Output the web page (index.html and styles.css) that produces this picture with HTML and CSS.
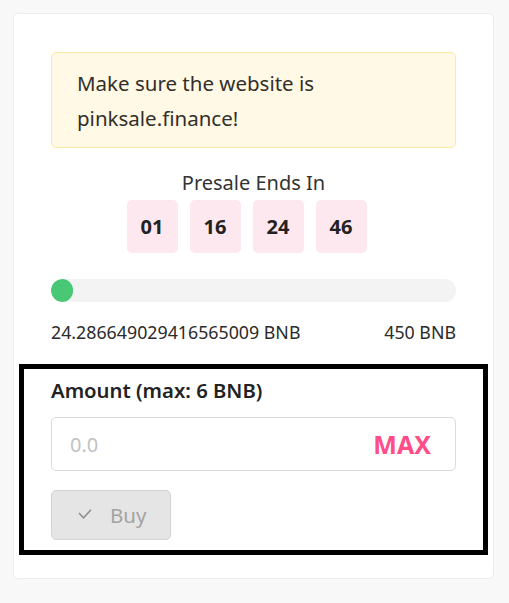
FILE: index.html
```html
<!DOCTYPE html>
<html>
<head>
<meta charset="utf-8">
<link rel="stylesheet" href="styles.css">
</head>
<body>
<div class="card">
  <div class="alert">Make sure the website is pinksale.finance!</div>
  <div class="countdown">
    <div class="title">Presale Ends In</div>
    <div class="boxes">
      <div class="box">01</div>
      <div class="box">16</div>
      <div class="box">24</div>
      <div class="box">46</div>
    </div>
  </div>
  <div class="track"><div class="fill" style="width:22px"></div></div>
  <div class="labels"><span>24.286649029416565009 BNB</span><span>450 BNB</span></div>
  <div class="buybox">
    <div class="label">Amount (max: 6 BNB)</div>
    <div class="input">
      <span class="ph">0.0</span>
      <span class="max">MAX</span>
    </div>
    <button class="buy">
      <svg class="check" width="14" height="10" viewBox="0 0 14 10"><polyline points="1,4 5.5,8.8 13,0.8" fill="none" stroke="#8f8f8f" stroke-width="1.6"/></svg>
      <span>Buy</span>
    </button>
  </div>
</div>
</body>
</html>
```
FILE: styles.css
```css
* { box-sizing: border-box; }
body {
  margin: 0;
  padding: 13px;
  background: #f8f8f8;
  font-family: "Noto Sans", "Open Sans", sans-serif;
  color: #2b2b2b;
}
.card {
  width: 481px;
  background: #fff;
  border: 1px solid #ededed;
  border-radius: 5px;
  padding: 38px 37px 23px;
}
.alert {
  background: #fff9e6;
  border: 1px solid #fde8a0;
  border-radius: 5px;
  padding: 13px 40px 11px 25px;
  font-size: 20.5px;
  line-height: 35px;
  color: #332f2a;
}
.countdown {
  margin-top: 21px;
  text-align: center;
}
.title {
  font-size: 20px;
  line-height: 28px;
  color: #333;
}
.boxes {
  display: flex;
  justify-content: center;
  gap: 12px;
  margin-top: 3px;
  padding-right: 14px;
}
.box {
  width: 51px;
  height: 53px;
  background: #fde8ef;
  border-radius: 5px;
  display: flex;
  align-items: center;
  justify-content: center;
  font-weight: 700;
  font-size: 20px;
  color: #222;
}
.track {
  margin-top: 26px;
  height: 23px;
  border-radius: 12px;
  background: #f3f3f3;
  overflow: hidden;
}
.fill {
  height: 100%;
  background: #48c774;
  border-radius: 12px;
}
.labels {
  margin-top: 18px;
  display: flex;
  justify-content: space-between;
  font-size: 17.8px;
  line-height: 24px;
  color: #2b2b2b;
}
.buybox {
  margin: 20px -32px 0;
  border: 5px solid #000;
  padding: 7px 27px 10px;
}
.label {
  font-size: 20.3px;
  font-weight: 600;
  line-height: 28px;
  color: #222;
}
.input {
  margin-top: 13px;
  height: 54px;
  border: 1px solid #dbdbdb;
  border-radius: 5px;
  display: flex;
  align-items: center;
  justify-content: space-between;
  padding: 0 24px 0 18px;
}
.ph {
  font-size: 20px;
  color: #c2c2c2;
}
.max {
  font-size: 25px;
  font-weight: 700;
  color: #ff4d8a;
}
.buy {
  margin-top: 19px;
  width: 120px;
  height: 50px;
  background: #e5e5e5;
  border: 1px solid #d3d3d3;
  border-radius: 5px;
  display: flex;
  align-items: center;
  justify-content: flex-start;
  gap: 18px;
  padding: 0 0 0 26px;
  font-family: inherit;
  font-size: 20.5px;
  color: #a3a3a3;
}
.check {
  margin-top: -3px;
}
```
